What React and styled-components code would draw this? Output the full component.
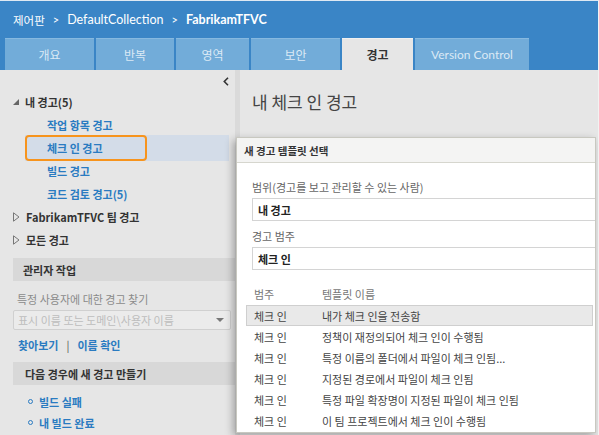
import React from 'react';
import styled, { createGlobalStyle } from 'styled-components';

const Global = createGlobalStyle`
  html, body { margin: 0; padding: 0; }
  body {
    font-family: "Noto Sans CJK KR", sans-serif;
    font-size: 11px;
    color: #333;
  }
`;

const Page = styled.div`
  width: 599px;
  height: 435px;
  display: flex;
  flex-direction: column;
  background: #e6e6e6;
  overflow: hidden;
  box-sizing: border-box;
  border-top: 1px solid #dfe9f3;
  border-right: 1px solid #f2f2f2;
`;

const Header = styled.div`
  background: #3a85c6;
  height: 69px;
  display: flex;
  flex-direction: column;
  flex-shrink: 0;
  font-family: Lato, "Noto Sans CJK KR", sans-serif;
`;

const Breadcrumb = styled.div`
  height: 37px;
  display: flex;
  align-items: center;
  gap: 7px;
  padding-left: 13px;
  color: #fff;
  font-size: 12px;
`;

const Crumb = styled.span`
  font-weight: ${p => (p.$current ? 700 : 400)};
  font-size: ${p => (p.$hangul ? 11.5 : 12.5)}px;
`;

const Sep = styled.span`
  font-size: 11px;
  padding: 0 1px;
`;

const Tabs = styled.div`
  display: flex;
  gap: 2px;
  padding-left: 5px;
  height: 32px;
`;

const Tab = styled.div`
  width: ${p => p.$w}px;
  display: flex;
  align-items: center;
  justify-content: center;
  box-sizing: border-box;
  background: ${p => (p.$active ? '#e6e6e6' : '#72acd9')};
  border-top: 1px solid ${p => (p.$active ? '#f0f0f0' : '#86b9e0')};
  color: ${p => (p.$active ? '#333' : '#dbe9f5')};
  font-weight: ${p => (p.$active ? 700 : 400)};
  font-size: 12px;
`;

const Body = styled.div`
  flex: 1;
  display: flex;
  position: relative;
  min-height: 0;
`;

const Sidebar = styled.div`
  width: 235px;
  flex-shrink: 0;
  display: flex;
  flex-direction: column;
`;

const CollapseRow = styled.div`
  height: 18px;
  display: flex;
  justify-content: flex-end;
  align-items: center;
  padding-right: 6px;
  padding-top: 2px;
`;

const Tree = styled.div`
  display: flex;
  flex-direction: column;
`;

const Node = styled.div`
  height: 23px;
  display: flex;
  align-items: center;
  padding-left: 13px;
  gap: 6px;
  font-weight: 700;
  color: #333;
`;

const Leaf = styled.div`
  height: ${p => (p.$selected ? 26 : 23)}px;
  margin: ${p => (p.$selected ? '-1px 6px -2px 25px' : '0 6px 0 25px')};
  display: flex;
  align-items: center;
  background: ${p => (p.$selected ? '#d3dce8' : 'transparent')};
  color: #2a7bc1;
  font-weight: 700;
`;

const Highlight = styled.span`
  height: 100%;
  display: flex;
  align-items: center;
  box-sizing: border-box;
  padding-left: ${p => (p.$on ? 20 : 22)}px;
  width: 122px;
  border: ${p => (p.$on ? '2px solid #f7941d' : 'none')};
  border-radius: 4px;
`;

const SectionHeader = styled.div`
  height: 23px;
  margin: ${p => p.$mt}px 0 0 13px;
  display: flex;
  align-items: center;
  padding-left: ${p => p.$pl}px;
  background: #d8d8d8;
  font-weight: 700;
  color: #333;
`;

const FieldLabel = styled.div`
  margin: 9px 0 0 17px;
  line-height: 18px;
  color: #8a8a8a;
`;

const UserInput = styled.div`
  height: 20px;
  margin: 2px 4px 0 13px;
  box-sizing: border-box;
  border: 1px solid #d0d0d0;
  border-radius: 2px;
  background: #ebebeb;
  display: flex;
  align-items: center;
  justify-content: space-between;
  padding: 0 6px 0 4px;
  color: #bdbdbd;
`;

const Links = styled.div`
  margin: 6px 0 0 18px;
  line-height: 18px;
  display: flex;
  gap: 8px;
  color: #2a7bc1;
  font-weight: 700;
`;

const Pipe = styled.span`
  color: #555;
  font-weight: 400;
`;

const Bullets = styled.div`
  margin: 6px 0 0 28px;
  display: flex;
  flex-direction: column;
`;

const Bullet = styled.div`
  height: 21px;
  display: flex;
  align-items: center;
  gap: 6px;
  color: #2a7bc1;
  font-weight: 700;
  &::before {
    content: '';
    width: 3px;
    height: 3px;
    border: 1px solid #2a7bc1;
    border-radius: 50%;
  }
`;

const Splitter = styled.div`
  width: 5px;
  flex-shrink: 0;
  background: #dadada;
`;

const Main = styled.div`
  flex: 1;
  padding-left: 12px;
`;

const PageTitle = styled.h1`
  margin: 20px 0 0;
  font-size: 17px;
  line-height: 24px;
  font-weight: 400;
  color: #444;
`;

const Dialog = styled.div`
  position: absolute;
  left: 236px;
  top: 67px;
  width: 360px;
  height: 296px;
  box-sizing: border-box;
  background: #fff;
  border: 1px solid #c8c8c0;
  box-shadow: -3px 3px 8px rgba(0, 0, 0, 0.3);
  overflow: hidden;
  display: flex;
  flex-direction: column;
`;

const DialogTitle = styled.div`
  height: 25px;
  box-sizing: border-box;
  flex-shrink: 0;
  background: #f4f4f3;
  border-bottom: 1px solid #d6d6ce;
  display: flex;
  align-items: center;
  padding-left: 7px;
  font-size: 10.5px;
  font-weight: 700;
  color: #333;
`;

const DialogBody = styled.div`
  padding-left: 15px;
  display: flex;
  flex-direction: column;
`;

const Label = styled.div`
  margin-top: ${p => p.$mt}px;
  line-height: 18px;
  color: #666;
`;

const TextBox = styled.div`
  width: 360px;
  height: 23px;
  margin-top: ${p => p.$mt}px;
  box-sizing: border-box;
  border: 1px solid #d4d4d4;
  display: flex;
  align-items: center;
  padding-left: 5px;
  font-weight: 700;
  color: #222;
`;

const Table = styled.div`
  margin: 14px 2px 0 -6px;
  display: flex;
  flex-direction: column;
`;

const Row = styled.div`
  display: grid;
  grid-template-columns: 68px 1fr;
  height: ${p => (p.$head ? 20 : 21)}px;
  align-items: center;
  padding-left: 7px;
  box-sizing: border-box;
  color: ${p => (p.$head ? '#777' : '#444')};
  background: ${p => (p.$selected ? '#e9e9e9' : 'transparent')};
  border: 1px solid ${p => (p.$selected ? '#cfcfcf' : 'transparent')};
  margin-top: ${p => (p.$selected ? 1 : 0)}px;
`;

const Triangle = ({ open }) =>
  open ? (
    <svg width="6" height="6" viewBox="0 0 6 6">
      <path d="M6 0 L6 6 L0 6 Z" fill="#666" />
    </svg>
  ) : (
    <svg width="7" height="10" viewBox="0 0 7 10">
      <path d="M0.5 0.8 L6 5 L0.5 9.2 Z" fill="none" stroke="#777" />
    </svg>
  );

const Chevron = () => (
  <svg width="6" height="9" viewBox="0 0 6 9">
    <path d="M5 0.8 L1.3 4.5 L5 8.2" fill="none" stroke="#333" strokeWidth="1.6" />
  </svg>
);

const Caret = () => (
  <svg width="8" height="4" viewBox="0 0 8 4">
    <path d="M0 0 L8 0 L4 4 Z" fill="#777" />
  </svg>
);

const tabs = [
  { label: '개요', w: 89 },
  { label: '반복', w: 78 },
  { label: '영역', w: 73 },
  { label: '보안', w: 89 },
  { label: '경고', w: 71, active: true },
  { label: 'Version Control', w: 114 },
];

const myAlerts = ['작업 항목 경고', '체크 인 경고', '빌드 경고', '코드 검토 경고(5)'];

const templates = [
  '내가 체크 인을 전송함',
  '정책이 재정의되어 체크 인이 수행됨',
  '특정 이름의 폴더에서 파일이 체크 인됨...',
  '지정된 경로에서 파일이 체크 인됨',
  '특정 파일 확장명이 지정된 파일이 체크 인됨',
  '이 팀 프로젝트에서 체크 인이 수행됨',
];

export default function App() {
  return (
    <>
      <Global />
      <Page>
        <Header>
          <Breadcrumb>
            <Crumb $hangul>제어판</Crumb>
            <Sep>&gt;</Sep>
            <Crumb>DefaultCollection</Crumb>
            <Sep>&gt;</Sep>
            <Crumb $current>FabrikamTFVC</Crumb>
          </Breadcrumb>
          <Tabs>
            {tabs.map(t => (
              <Tab key={t.label} $w={t.w} $active={t.active}>
                {t.label}
              </Tab>
            ))}
          </Tabs>
        </Header>
        <Body>
          <Sidebar>
            <CollapseRow>
              <Chevron />
            </CollapseRow>
            <Tree>
              <Node>
                <Triangle open />내 경고(5)
              </Node>
              {myAlerts.map(a => {
                const sel = a === '체크 인 경고';
                return (
                  <Leaf key={a} $selected={sel}>
                    <Highlight $on={sel}>{a}</Highlight>
                  </Leaf>
                );
              })}
              <Node>
                <Triangle />FabrikamTFVC 팀 경고
              </Node>
              <Node>
                <Triangle />모든 경고
              </Node>
            </Tree>
            <SectionHeader $mt={7} $pl={10}>관리자 작업</SectionHeader>
            <FieldLabel>특정 사용자에 대한 경고 찾기</FieldLabel>
            <UserInput>
              <span>표시 이름 또는 도메인\사용자 이름</span>
              <Caret />
            </UserInput>
            <Links>
              <span>찾아보기</span>
              <Pipe>|</Pipe>
              <span>이름 확인</span>
            </Links>
            <SectionHeader $mt={8} $pl={12}>다음 경우에 새 경고 만들기</SectionHeader>
            <Bullets>
              <Bullet>빌드 실패</Bullet>
              <Bullet>내 빌드 완료</Bullet>
            </Bullets>
          </Sidebar>
          <Splitter />
          <Main>
            <PageTitle>내 체크 인 경고</PageTitle>
          </Main>
          <Dialog>
            <DialogTitle>새 경고 템플릿 선택</DialogTitle>
            <DialogBody>
              <Label $mt={15}>범위(경고를 보고 관리할 수 있는 사람)</Label>
              <TextBox $mt={2}>내 경고</TextBox>
              <Label $mt={6}>경고 범주</Label>
              <TextBox $mt={2}>체크 인</TextBox>
              <Table>
                <Row $head>
                  <span>범주</span>
                  <span>템플릿 이름</span>
                </Row>
                {templates.map((t, i) => (
                  <Row key={t} $selected={i === 0}>
                    <span>체크 인</span>
                    <span>{t}</span>
                  </Row>
                ))}
              </Table>
            </DialogBody>
          </Dialog>
        </Body>
      </Page>
    </>
  );
}
